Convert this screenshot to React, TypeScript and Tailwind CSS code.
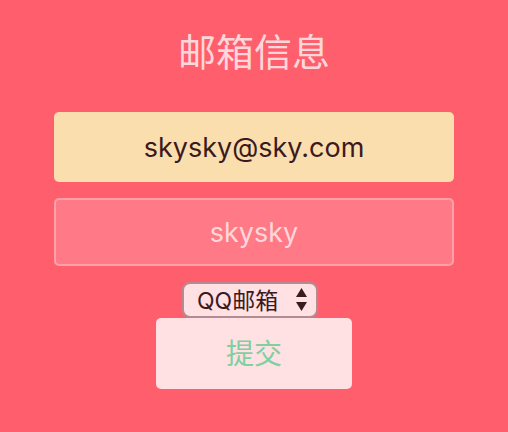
import { useState } from 'react';

const font = { fontFamily: '"Inter", "Noto Sans CJK SC", sans-serif' };

export default function App() {
  const [email, setEmail] = useState('skysky@sky.com');
  const [name, setName] = useState('skysky');
  const [kind, setKind] = useState('qq');

  return (
    <div
      className="flex min-h-[432px] w-full flex-col items-center bg-[#ff5f6d] pt-[28px]"
      style={font}
    >
      <h1 className="text-[38px] leading-[48px] font-normal text-[#ffd7db]">邮箱信息</h1>

      <input
        value={email}
        onChange={(e) => setEmail(e.target.value)}
        className="mt-[36px] h-[70px] w-[400px] rounded-[5px] bg-[#fbdeae] text-center text-[27px] text-[#3b1a1f] outline-none"
      />
      <input
        value={name}
        onChange={(e) => setName(e.target.value)}
        className="mt-4 h-[68px] w-[400px] rounded-[5px] border-2 border-[#ffa1a9] bg-[#ff7a86] text-center text-[27px] text-[#ffd7db] outline-none"
      />

      <div className="relative mt-4 mr-2 h-9 w-[136px]">
        <select
          value={kind}
          onChange={(e) => setKind(e.target.value)}
          className="h-full w-full appearance-none rounded-[8px] border-2 border-[#b58b92] bg-[#ffe0e3] pl-[13px] text-[23px] text-[#3b1a1f] outline-none"
        >
          <option value="qq">QQ邮箱</option>
          <option value="163">163邮箱</option>
          <option value="gmail">Gmail</option>
        </select>
        <svg
          className="pointer-events-none absolute top-[6px] right-[11px]"
          width="11"
          height="24"
          viewBox="0 0 11 24"
        >
          <path d="M5.5 0 L11 9 L0 9 Z" fill="#3b1a1f" />
          <path d="M0 14 L11 14 L5.5 23 Z" fill="#3b1a1f" />
        </svg>
      </div>

      <button className="h-[71px] w-[196px] rounded-[5px] bg-[#ffe0e3] text-[28px] text-[#7fcf9f]">
        提交
      </button>
    </div>
  );
}
